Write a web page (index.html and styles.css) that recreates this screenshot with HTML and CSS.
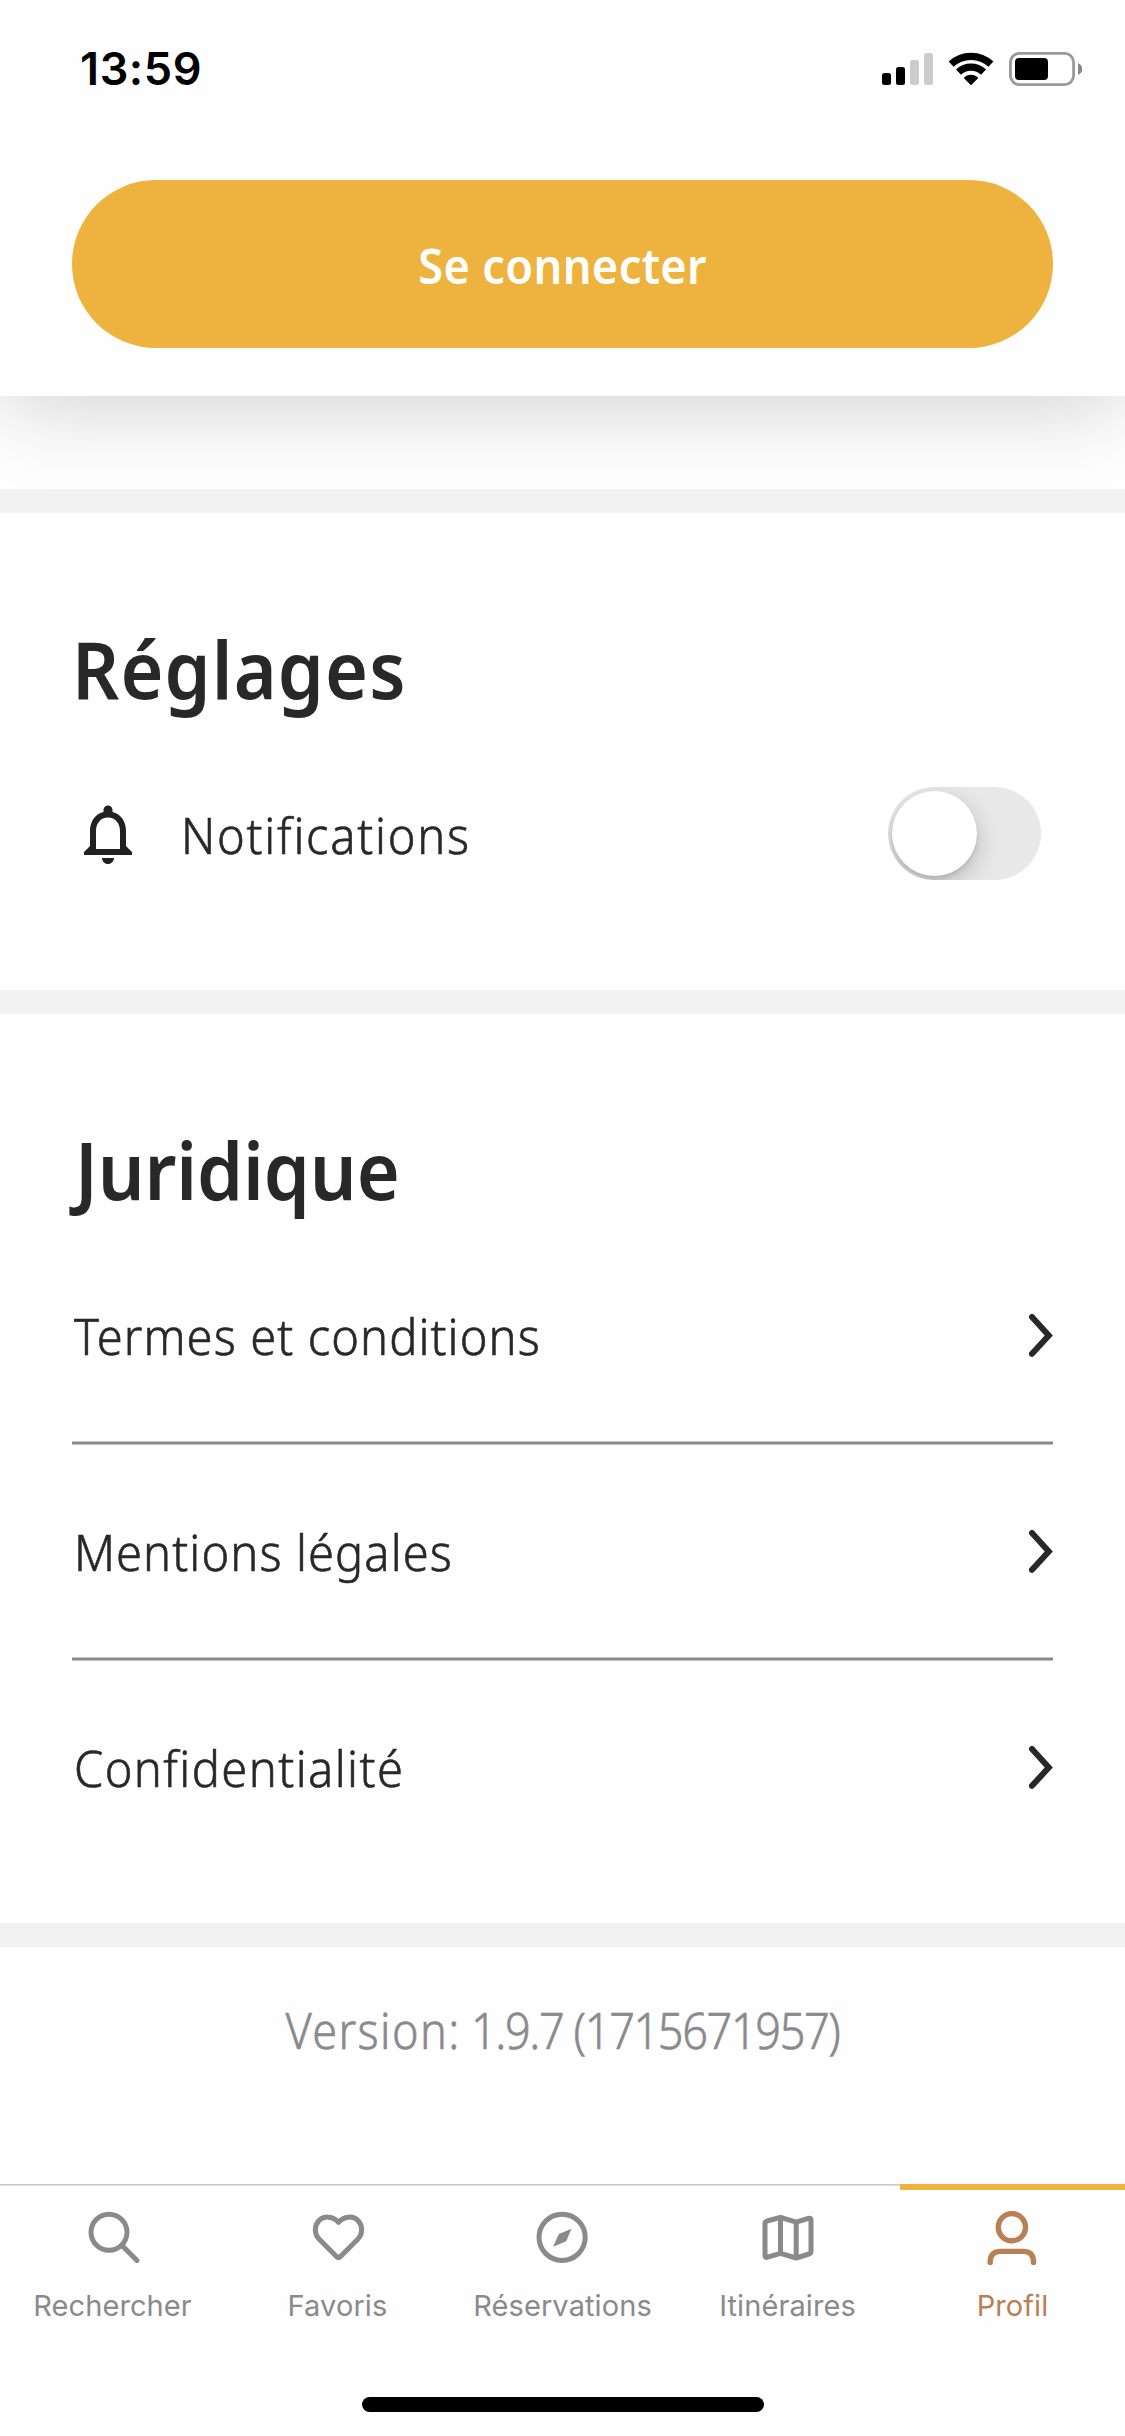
FILE: index.html
```
<!DOCTYPE html>
<html lang="fr">
<head>
<meta charset="utf-8">
<title>Profil</title>
<link rel="stylesheet" href="styles.css">
</head>
<body>
<div class="app">
  <header class="header">
    <div class="status">
      <span class="status-time">13:59</span>
      <div class="status-icons">
        <svg width="51" height="34" viewBox="0 0 51 34">
          <rect x="0" y="21" width="9" height="12" rx="2.5"/>
          <rect x="14" y="15" width="9" height="18" rx="2.5"/>
          <rect x="28" y="8" width="9" height="25" rx="2.5" fill="#ccc"/>
          <rect x="42" y="1" width="9" height="32" rx="2.5" fill="#ccc"/>
        </svg>
        <svg width="46" height="34" viewBox="0 0 46 34">
          <g fill="none" stroke="#000" stroke-width="7.2">
            <path d="M3.1 12.2A29.2 29.2 0 0 1 42.9 12.2"/>
            <path d="M10.5 20.1A18.3 18.3 0 0 1 35.5 20.1"/>
          </g>
          <path d="M23 33.3L16.2 26.4Q15.8 25.6 16.6 25A10.5 10.5 0 0 1 29.4 25Q30.2 25.6 29.8 26.4Z"/>
        </svg>
        <svg width="73" height="34" viewBox="0 0 73 34">
          <rect x="1.4" y="1.4" width="63.2" height="31.2" rx="9" fill="none" stroke="#999" stroke-width="2.8"/>
          <rect x="6" y="6" width="33" height="22" rx="4"/>
          <path d="M69 11A6.4 6.4 0 0 1 69 23Z" fill="#888"/>
        </svg>
      </div>
    </div>
    <button class="login" type="button"><span class="login-text">Se connecter</span></button>
  </header>

  <main class="content">
    <section class="section">
      <h2 class="title title-reglages">Réglages</h2>
      <div class="setting">
        <svg class="bell" width="72" height="72" viewBox="0 0 24 24" fill="#212121"><path d="M12 22c1.1 0 2-.9 2-2h-4c0 1.1.9 2 2 2zm6-6v-5c0-3.07-1.63-5.64-4.5-6.32V4c0-.83-.67-1.5-1.5-1.5s-1.5.67-1.5 1.5v.68C7.64 5.36 6 7.92 6 11v5l-2 2v1h16v-1l-2-2zm-2 1H8v-6c0-2.48 1.51-4.5 4-4.5s4 2.02 4 4.5v6z"/></svg>
        <span class="label notif">Notifications</span>
        <div class="toggle"><div class="knob"></div></div>
      </div>
    </section>

    <section class="section legal">
      <h2 class="title title-juridique">Juridique</h2>
      <div class="row lined">
        <span class="label">Termes et conditions</span>
        <svg class="chevron" width="24" height="43" viewBox="0 0 24 43"><path d="M3 3L19.8 21.4L3 39.8"/></svg>
      </div>
      <div class="row lined">
        <span class="label">Mentions légales</span>
        <svg class="chevron" width="24" height="43" viewBox="0 0 24 43"><path d="M3 3L19.8 21.4L3 39.8"/></svg>
      </div>
      <div class="row">
        <span class="label confid">Confidentialité</span>
        <svg class="chevron" width="24" height="43" viewBox="0 0 24 43"><path d="M3 3L19.8 21.4L3 39.8"/></svg>
      </div>
    </section>

    <section class="version"><p class="version-text"><span class="version-name">Version:</span> 1.9.7 (1715671957)</p></section>
  </main>

  <nav class="tabbar">
    <div class="tabs">
      <div class="tab">
        <svg width="60" height="60" viewBox="0 0 60 60"><circle cx="26" cy="25.2" r="18"/><path d="M39 38.4L54 53.4"/></svg>
        <span>Rechercher</span>
      </div>
      <div class="tab">
        <svg width="60" height="60" viewBox="0 0 60 60"><path d="M30.5 15.3C25 9 16 8.5 11 13.5C6 19 6.2 27 11 32L28.5 49.5Q30.5 51.2 32.5 49.5L50 32C54.8 27 55 19 50 13.5C45 8.5 36 9 30.5 15.3Z"/></svg>
        <span>Favoris</span>
      </div>
      <div class="tab">
        <svg width="60" height="60" viewBox="0 0 60 60"><circle cx="29.1" cy="30.3" r="23.1"/><path class="solid" d="M20.2 39.7L25.8 27L38.5 21.7L33.2 34.3Z"/></svg>
        <span>Réservations</span>
      </div>
      <div class="tab">
        <svg width="60" height="60" viewBox="0 0 60 60"><path d="M7 16.5Q7 14.7 9 14L22.5 10.3L38.2 15.2L50.5 11.3Q53 10.6 53 13V44.5Q53 46.3 51 47L38.2 51L22.5 46.3L9.5 50.2Q7 51 7 48.5ZM22.5 10.3V46.3M38.2 15.2V51"/></svg>
        <span>Itinéraires</span>
      </div>
      <div class="tab active">
        <svg width="60" height="60" viewBox="0 0 60 60"><circle cx="28.9" cy="20.2" r="13.6"/><path d="M7.2 55.4V54Q7.9 44.4 17.5 44.4H40.5Q49.8 44.4 50.5 54V55.4"/></svg>
        <span>Profil</span>
      </div>
    </div>
    <div class="home-indicator"></div>
  </nav>
</div>
</body>
</html>
```
FILE: styles.css
```
* { box-sizing: border-box; margin: 0; padding: 0; }

body {
  background: #fefefe;
  color: #282828;
  font-family: "Noto Sans", "Open Sans", sans-serif;
}

svg { display: block; flex: none; }

.app {
  display: flex;
  flex-direction: column;
  width: 1125px;
  height: 2436px;
  overflow: hidden;
}

/* Header */
.header {
  position: relative;
  z-index: 1;
  height: 396px;
  padding: 0 72px;
  background: #fefefe;
  box-shadow: 0 10px 80px rgba(0, 0, 0, 0.18);
}

.status {
  display: flex;
  align-items: center;
  justify-content: space-between;
  height: 138px;
  margin: 0 -29px 42px 8px;
}

.status-time {
  color: #000;
  font: 600 45px/60px Inter, sans-serif;
  letter-spacing: 0.6px;
}

.status-icons { display: flex; gap: 15px; }

.login {
  display: block;
  width: 100%;
  height: 168px;
  padding-top: 3px;
  border: 0;
  border-radius: 84px;
  background: #eeb33e;
  color: #fff;
  font: 600 48px/60px "Noto Sans", sans-serif;
}

.login-text {
  display: inline-block;
  letter-spacing: 0.4px;
  transform: scaleX(0.94);
}

/* Sections */
.content { flex: 1; padding-top: 93px; }

.section {
  height: 501px;
  padding: 105px 72px 0;
  border-top: 24px solid #f1f1f1;
}

.legal { height: 933px; }

/* Headings and labels are set slightly condensed */
.title {
  font-size: 80px;
  font-weight: 600;
  line-height: 100px;
  transform: scaleX(0.92);
  transform-origin: left;
}

.title-reglages { margin-left: 0; letter-spacing: 1.2px; }
.title-juridique { margin-left: 3px; letter-spacing: -0.1px; }

.label {
  padding: 3px 0 0 1px;
  font-size: 49px;
  font-weight: 300;
  line-height: 60px;
  letter-spacing: 1.15px;
  transform: scaleX(0.96);
  transform-origin: left;
  -webkit-text-stroke: 0.6px currentColor;
}

.row .label { padding: 1px 0 0 2px; }
.notif { letter-spacing: 1.85px; }
.confid { letter-spacing: 1.5px; }

.setting {
  display: flex;
  align-items: center;
  gap: 36px;
  height: 93px;
  margin-top: 69px;
}

.toggle {
  width: 153px;
  height: 93px;
  margin: 0 12px 0 auto;
  padding: 4px;
  border-radius: 47px;
  background: #e8e8e8;
  overflow: hidden;
}

.knob {
  width: 85px;
  height: 85px;
  border-radius: 50%;
  background: #fff;
  box-shadow: 0 9px 24px rgba(0, 0, 0, 0.2), 0 3px 4px rgba(0, 0, 0, 0.1);
}

.row {
  display: flex;
  align-items: center;
  justify-content: space-between;
  height: 216px;
  padding-bottom: 4px;
}

.title + .row { margin-top: 10px; }

.lined {
  background: linear-gradient(#c3c3c5 0 1px, #8a8a8d 1px 3px, #c3c3c5 3px) bottom / 100% 4px no-repeat;
}

.chevron { fill: none; stroke: #282828; stroke-width: 6; stroke-linecap: round; }

.version {
  padding-top: 53px;
  border-top: 24px solid #f1f1f1;
  color: #8a8a8d;
}

.version-text {
  font-size: 49px;
  font-weight: 300;
  line-height: 60px;
  letter-spacing: -1.5px;
  text-align: center;
  transform: scaleX(0.92);
  -webkit-text-stroke: 0.6px currentColor;
}

.version-name { letter-spacing: 1.5px; }

/* Tab bar */
.tabbar {
  height: 252px;
  background: linear-gradient(#c8c8c9 0 1px, #dfdfdf 1px) top / 100% 2px no-repeat;
}

.tabs { display: grid; grid-template-columns: repeat(5, 1fr); }

.tab {
  display: flex;
  flex-direction: column;
  align-items: center;
  gap: 21px;
  padding-top: 17px;
  border-top: 6px solid transparent;
  color: #8a8a8d;
  font: 400 29px/36px Inter, sans-serif;
  letter-spacing: 0.1px;
}

.tab svg {
  fill: none;
  stroke: currentColor;
  stroke-width: 5;
  stroke-linecap: round;
  stroke-linejoin: round;
}

.tab .solid { fill: currentColor; stroke: none; }

.tab.active { border-top-color: #eeb33e; color: #b97f55; }
.tab.active svg { stroke-width: 5.4; }

.home-indicator {
  width: 402px;
  height: 15px;
  margin: 73px auto 0;
  border-radius: 7.5px;
  background: #000;
}
```
